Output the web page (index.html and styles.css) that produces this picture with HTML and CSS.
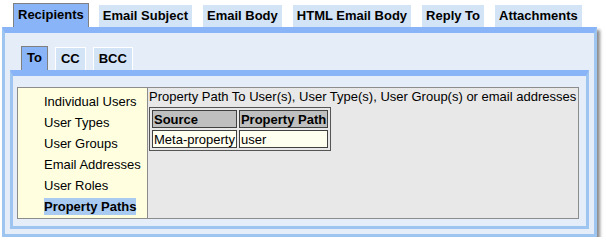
FILE: index.html
```html
<!DOCTYPE html>
<html lang="en">
<head>
    <meta charset="UTF-8">
    <title>Email Recipients</title>
    <link rel="stylesheet" href="styles.css">
</head>
<body>
    <div class="tabset outer">
        <div class="tabs">
            <span class="tab active">Recipients</span>
            <span class="tab">Email Subject</span>
            <span class="tab">Email Body</span>
            <span class="tab">HTML Email Body</span>
            <span class="tab">Reply To</span>
            <span class="tab">Attachments</span>
        </div>
        <div class="panel">
            <div class="tabset inner">
                <div class="tabs">
                    <span class="tab active">To</span>
                    <span class="tab">CC</span>
                    <span class="tab">BCC</span>
                </div>
                <div class="panel">
                    <div class="box">
                        <ul class="menu">
                            <li><span>Individual Users</span></li>
                            <li><span>User Types</span></li>
                            <li><span>User Groups</span></li>
                            <li><span>Email Addresses</span></li>
                            <li><span>User Roles</span></li>
                            <li class="selected"><span>Property Paths</span></li>
                        </ul>
                        <div class="detail">
                            <div class="caption">Property Path To User(s), User Type(s), User Group(s) or email addresses</div>
                            <table class="paths">
                                <tr>
                                    <th>Source</th>
                                    <th>Property Path</th>
                                </tr>
                                <tr>
                                    <td>Meta-property</td>
                                    <td>user</td>
                                </tr>
                            </table>
                        </div>
                    </div>
                </div>
            </div>
        </div>
    </div>
</body>
</html>
```

FILE: styles.css
```css
body {
    margin: 0;
    background: #ffffff;
    font-family: "Liberation Sans", Arial, sans-serif;
    font-size: 13px;
    color: #000000;
}
.outer {
    margin: 3px 0 0 2px;
    width: 595px;
}
.tabs {
    display: flex;
    align-items: flex-end;
    gap: 9px;
    height: 24px;
    padding-left: 11px;
}
.tab {
    box-sizing: border-box;
    height: 23px;
    line-height: 22px;
    padding: 0 4px;
    font-weight: bold;
    background-color: #d3e4f7;
    border: 1px solid #ffffff;
    border-bottom: none;
}
.tab.active {
    height: 24px;
    background-color: #8ab4f8;
    border-color: #808080;
}
.panel {
    background-color: #e5edf8;
    border: 3px solid #9dc5f0;
    border-top: 6px solid #8ab4f8;
}
.outer > .panel {
    padding: 13px 5px 5px 5px;
    box-shadow: 3px 3px 3px rgba(0, 0, 0, 0.45);
}
.inner .tabs {
    gap: 7px;
}
.inner .tab {
    padding: 0 5px;
}
.inner > .panel {
    padding: 11px 7px 7px 4px;
}
.box {
    display: flex;
    height: 132px;
    box-sizing: border-box;
    border: 1px solid #8c8c8c;
    background-color: #e8e8e8;
}
.menu {
    list-style: none;
    margin: 0;
    padding: 3px 0 0 26px;
    width: 103px;
    background-color: #ffffe0;
    border-right: 1px solid #8c8c8c;
}
.menu li {
    height: 21px;
    line-height: 21px;
    white-space: nowrap;
}
.menu li.selected span {
    font-weight: bold;
    background-color: #a9cbf2;
    padding: 1px 0;
}
.detail {
    flex: 1;
    padding: 1px 0 0 1px;
}
.caption {
    line-height: 15px;
    white-space: nowrap;
}
.paths {
    margin-top: 3px;
    border: 1px solid #555555;
    border-spacing: 2px;
}
.paths th,
.paths td {
    height: 16px;
    padding: 0 1px;
    border: 1px solid #404040;
    text-align: left;
    white-space: nowrap;
}
.paths th {
    background-color: #bfbfbf;
}
.paths td {
    background-color: #fffff0;
}
```
